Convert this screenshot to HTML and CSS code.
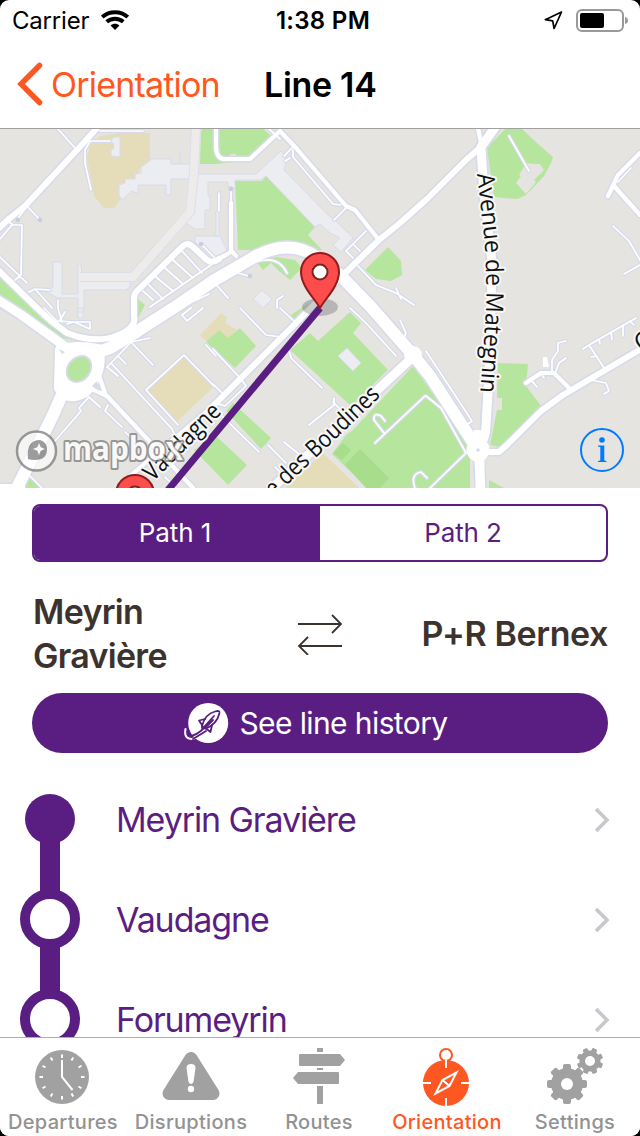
FILE: index.html
```html
<!DOCTYPE html>
<html lang="en">
<head>
<meta charset="utf-8">
<title>Line 14</title>
<link rel="stylesheet" href="styles.css">
</head>
<body>
<div class="screen">
  <header class="status">
    <div class="status-left"><span class="carrier">Carrier</span>
      <svg class="wifi" width="28" height="20" viewBox="0 0 28 20" fill="none" stroke="#000" stroke-width="4"><path d="M1.200 7C8.400 .6 19.600 .6 26.800 7"/><path d="M5.700 11.800C10.400 7.600 17.600 7.600 22.300 11.800"/><path d="M9.600 15.600C12 13.200 16 13.200 18.400 15.600L14 20Z" fill="#000" stroke="none"/></svg>
    </div>
    <div class="time">1:38 PM</div>
    <div class="status-right">
      <svg width="20" height="20" viewBox="0 0 20 20" fill="none" stroke="#000" stroke-width="1.700" stroke-linejoin="round"><path d="M18.500 2 2.300 9.700 9.700 10.900 11.100 18.500Z"/></svg>
      <svg width="54" height="24" viewBox="0 0 54 24"><rect x="2" y="2" width="46" height="21" rx="5" fill="none" stroke="#999" stroke-width="2"/><rect x="5" y="5" width="24" height="15" rx="2"/><path d="M50 9Q53 10 53 12.500T50 16Z" fill="#999"/></svg>
    </div>
  </header>
  <nav class="nav">
    <svg width="26" height="44" viewBox="0 0 26 44" fill="none" stroke="#ff5722" stroke-width="5.500" stroke-linecap="round" stroke-linejoin="miter"><path d="M22.500 3.500 4 22 22.500 40.500"/></svg>
    <span class="back">Orientation</span>
    <h1 class="title">Line 14</h1>
  </nav>
  <section class="map">
    <svg class="map-canvas" width="640" height="360" viewBox="0 128 640 360">
      <defs>
        <g id="thin">
          <path d="M57 128 75 148M90 141H110M90 141 85 150V163L91 190M100 131H143M27 206 17 220M27 206 40 220M0 239 12 225H22L21 275 15 280M8 221 13 225M0 257 27 283M29 292 35 289 52 308M35 289 50 290M58 300V308L62 322M201 244 214 257"/>
          <path d="M150 307 211 265M182 251 202 273M173 260 193 278M165 268 183 284M156 277 173 291M149 285 163 299M143 291 153 300M190 303 209 294"/>
          <path d="M268 128 280 139M293 150V157L333 204 341 205M293 147 284 156M285 161 290 158M346 208 334 220M366 231 346 251 353 258M353 244 360 251M358 266 376 285 396 293 414 305M401 299 396 288M231 188V203M234 272 249 276M234 272Q252 261 266 260T287 273M219 193V211M277 308V300L283 296M213 281 228 298"/>
          <path d="M350 308 366 323 396 356M400 320 406 333 403 340M289 351 291 358 322 388M334 398V405L309 425M333 402 346 415M240 308 266 335 281 337M280 308 296 323M213 349 241 379 246 386 225 406 219 404M213 384 222 393M221 415 259 452M268 445 286 463M284 442 300 455M275 467 285 477"/>
          <path d="M425 396 375 443M384 433 374 420Q373 412 381 416L385 421M415 488Q410 474 421 472L427 478M426 396 441 408 466 453 430 488M426 351 472 421 468 424M509 136 529 171"/>
          <path d="M613 226 629 241 640 260M624 274 640 265M618 182 631 168M552 371V360L558 351V343L566 341M556 371 559 363 566 358M532 381 537 387M541 373 544 378M604 368 589 345 636 318M583 349 589 345M599 339 600 344M611 332 612 340M623 325V336M630 321 634 325M591 357 597 356M591 380 606 383 609 391 604 394"/>
          <path d="M55 441 81 411 79 408 89 397 100 407M108 405 105 411 122 427M125 432 138 444M118 376 107 367 114 360 131 342 150 338M131 342 153 365M119 357 126 364M111 363 172 429 177 440 188 450M146 390 184 355 214 386M146 390 178 425M182 315 191 308M182 315 187 321 203 308M44 308 57 321M57 321 74 322 90 329V322H74L67 324M60 320 65 312M165 477 176 488M30 476 42 488M206 345 216 356"/>
        </g>
        <g id="narrow">
          <path d="M216 128V145Q216 160 226 159H250L280 131 296 148 346 206 355 210 379 240M231 203V250L236 256M213 262 231 252M640 153 618 175 608 196M614 186 640 215M526 383 541 373H554L571 390M478 128 482 147M90 388 107 396 193 488M97 370 106 396M130 476 213 406"/>
        </g>
        <g id="medium">
          <path d="M-2 229 10 218 25 206 77 150 97 128M-2 270 37 308 50 320 67 333Q95 344 116 336T134 316V298Q134 294 137 291L183 246Q188 242 193 247L207 260Q212 264 219 259M213 406 296 323 340 278 379 240 400 223 427 199 466 160 482 146M478 452H499L509 443 541 411 563 395 641 349M0 487H22"/>
        </g>
        <g id="wide">
          <path d="M-2 300 20 314 45 332 70 350M496 126 481 147 484 195 492 261 491 308 489 375 486 425Q486 438 478 450L481 490M270 490 415 355"/>
        </g>
        <g id="trunk">
          <path d="M80 358 110 348 133 334 178 305 213 281 256 256Q291 238 318 258L340 275 371 307 413 355 430 376 478 450M65 388 53 415 16 490"/>
          <path d="M61 350Q79 346 98 350Q102 374 84 392Q68 400 60 388Z"/>
        </g>
        <g id="pin">
          <path d="M0 0C-5-9-19-22-19-36A19 19 0 0 1 19-36C19-22 5-9 0 0Z" fill="#fc4c4b" stroke="#951a1b" stroke-width="2"/>
          <circle cy="-36" r="7.500" fill="#fff" stroke="#7e2425" stroke-width="2"/>
        </g>
        <path id="mategnin" d="M477 174 484 236Q488 285 485 325L480 396"/>
      </defs>
      <rect y="128" width="640" height="360" fill="#e5e4e1"/>
      <g fill="#e5ddb9">
        <path d="M90 145 100 136 119 133H150V160L140 168 135 178 119 185 120 200 114 208H104L94 196 90 175 87 158Z"/>
        <path d="M143 390 184 356 214 386 176 423ZM200 335 221 313 227 317 225 323 237 330 228 338 219 330 207 342ZM323 453 359 488H285Z"/>
      </g>
      <g fill="#b6e59e">
        <path d="M201 133 202 128H263L270 135 252 160 216 164H200ZM235 181H262L266 176 315 227 308 235 322 250H238ZM257 262 276 257 295 260 302 268 290 280 279 271 271 263 263 270ZM365 270 388 247 401 261 402 275 391 281 376 279Z"/>
        <path d="M487 148 506 128H521L538 144 553 157 551 163 544 176 526 195 517 199 494 197ZM0 275 12 285 36 306 60 331 90 343 63 338 40 324 18 308 0 298ZM137 298 145 305 138 318Z"/>
        <path d="M206 342 219 330 228 338 240 328 256 346 235 368ZM233 403 271 438 261 449 226 411ZM194 450 216 436 247 465 228 485ZM290 350 310 333 318 341 350 312 361 323 353 333 388 370 351 406ZM291 315 309 303 313 310 296 323Z"/>
        <path d="M413 366 470 445V488H368L332 454 346 435 353 430ZM498 363 528 364 526 386 541 406 500 447 490 445 497 410H502V398H497ZM489 480 504 488H489ZM28 476 43 488H23Z"/>
      </g>
      <path d="M343 443 351 450 342 460 333 453ZM360 449 389 478 380 488H366L345 465Z" fill="#a8dd8c"/>
      <path d="M516 183 521 176 519 175 526 163 534 164 540 164 544 170 534 180 536 182 526 194ZM271 128 268 133 263 128ZM230 154H236V158H230Z" fill="#e5e4e1"/>
      <g fill="#ebedf1" stroke="#d7dbea">
        <path d="M104 141 110 140 115 137H120V157L111 156V150L114 148 113 143ZM119 185 125 183V179H135V174L141 173V167L152 159H171V164H191V179H171V195H166V185H138V194L132 191 122 200 119 195ZM180 153V164"/>
        <path d="M53 262H62V294H78V264H81L82 274H131L130 287 126 290H84V312H78V298H58L44 291 53 287ZM195 236H220L227 250 214 262 195 242ZM216 211H219V236H216ZM347 348 361 363 353 371 338 356ZM262 290 272 299 263 308 253 299ZM78 308H83V318H78Z"/>
        <path d="M197 174H256L281 151 287 158 284 170 328 215 335 220 353 238 341 252 333 245 340 238 330 233 320 224 315 227 266 176 261 180H235V188H228V182H208V196H210V210H205V229H195L186 223 191 208 194 180Z"/>
      </g>
      <path d="M196 126 194 172 190 212 133 277H80" fill="none" stroke="#dcdfea" stroke-width="10"/>
      <path d="M196 126 194 172 190 212 133 277H80" fill="none" stroke="#edecea" stroke-width="8"/>
      <g fill="none" stroke="#d6daea" stroke-linejoin="round" stroke-linecap="round">
        <use href="#thin" stroke-width="4"/><use href="#narrow" stroke-width="7"/><use href="#medium" stroke-width="9"/><use href="#wide" stroke-width="12.500"/><use href="#trunk" stroke-width="15"/>
      </g>
      <g fill="none" stroke="#fff" stroke-linejoin="round" stroke-linecap="round">
        <use href="#thin" stroke-width="1.700"/><use href="#narrow" stroke-width="4.200"/><use href="#medium" stroke-width="6"/><use href="#wide" stroke-width="9"/><use href="#trunk" stroke-width="12"/>
      </g>
      <path d="M61 350Q79 346 98 350Q102 374 84 392Q68 400 60 388Z" fill="#fff"/>
      <ellipse cx="79" cy="369" rx="11" ry="14" transform="rotate(38 79 369)" fill="#b6e59e" stroke="#d6daea" stroke-width="2"/>
      <path d="M59 349 65 352 62 354ZM92 386 97 381 99 391Z" fill="#d6daea"/>
      <path d="M478 450V430M478 450 468 434M480 488V455" stroke="#fff" stroke-width="9" fill="none"/>
      <circle cx="478" cy="450" r="11.500" fill="#fff"/>
      <circle cx="478" cy="450" r="1.800" fill="#d6daea"/>
      <circle cx="413" cy="355" r="9" fill="#fff"/>
      <path d="M543 357H547L549 367H543Z" fill="#fff"/>
      <g fill="#c9cde0"><circle cx="40" cy="220" r="2.200"/><circle cx="18" cy="220" r="2.200"/><circle cx="201" cy="244" r="2.200"/><circle cx="231" cy="189" r="2.200"/><circle cx="250" cy="276" r="2.200"/></g>
      <ellipse cx="320" cy="307" rx="18" ry="9" fill="#000" opacity=".2"/>
      <path d="M320 308 168 490" stroke="#5a1e82" stroke-width="7"/>
      <g class="street">
        <text transform="translate(153 482) rotate(-45)" textLength="98" lengthAdjust="spacingAndGlyphs">Vaudagne</text>
        <text transform="translate(381 396) rotate(-43.500)" text-anchor="end" textLength="148" lengthAdjust="spacingAndGlyphs">e des Boudines</text>
        <text textLength="219" lengthAdjust="spacingAndGlyphs"><textPath href="#mategnin" textLength="219" lengthAdjust="spacingAndGlyphs">Avenue de Mategnin</textPath></text>
        <text transform="translate(640 352) rotate(-30)">C</text>
      </g>
      <g class="attribution">
        <circle cx="36.500" cy="451" r="19.500" fill="#fff" fill-opacity=".85" stroke="#7c7c7c" stroke-width="2.500"/>
        <path d="M28 459Q26 440 40 440A9 9 0 0 1 47 449Q47 460 35 460Q31 460 28 459Z" fill="#7c7c7c"/>
        <path d="M39 443 40.700 447.300 45 449 40.700 450.700 39 455 37.300 450.700 33 449 37.300 447.300Z" fill="#fff"/>
        <text x="63" y="460" textLength="120" lengthAdjust="spacingAndGlyphs">mapbox</text>
      </g>
      <use href="#pin" x="320" y="308"/>
      <use href="#pin" x="135" y="530"/>
      <g fill="#007aff"><circle cx="602" cy="450" r="21" fill="none" stroke="#007aff" stroke-width="2"/><circle cx="602" cy="440" r="2.800"/><path d="M598 445.500H604.300V460.500L606.500 461V462H598V461L600.300 460.500V447L598 446.500Z"/></g>
    </svg>
  </section>
  <main class="content">
    <div class="segments"><span class="segment active">Path 1</span><span class="segment">Path 2</span></div>
    <div class="direction">
      <span class="terminus">Meyrin<br>Gravière</span>
      <svg width="46" height="42" viewBox="0 0 46 42" fill="none" stroke="#3c322e" stroke-width="1.800"><path d="M1 11H44M35 2 44 11 35 20M45 33H2M11 24 2 33 11 42"/></svg>
      <span class="terminus end">P+R Bernex</span>
    </div>
    <div class="history">
      <svg width="45" height="42" viewBox="0 0 45 42" fill="none" stroke="#5a1e82" stroke-linecap="round" stroke-linejoin="round">
        <circle cx="24.200" cy="21" r="20" fill="#fff" stroke="none"/>
        <path d="M1.500 27Q0 35 5 36.500T15 34" stroke="#fff" stroke-width="2"/>
        <path d="M5 29 5.500 34Q12 34 20 26M9 37 22 29" stroke-width="1.800"/>
        <path d="M18 24Q21 12 31 9.500 36 8 35.500 11 33 22 22 26.500Z" stroke-width="1.800"/>
        <path d="M21 17 15 18.500 18 23 18 26 22 26.500 26.500 30 28 23M20 25 30 14M22 25 29 18" stroke-width="1.800"/>
      </svg>
      <span>See line history</span>
    </div>
    <ul class="stops">
      <li class="stop"><span class="rail"><i class="dot"></i></span><span class="name">Meyrin Gravière</span><svg width="18" height="28" viewBox="0 0 18 28" class="chev"><path d="M3 4 14 15 3 26"/></svg></li>
      <li class="stop"><span class="rail through"><i class="ring"></i></span><span class="name">Vaudagne</span><svg width="18" height="28" viewBox="0 0 18 28" class="chev"><path d="M3 4 14 15 3 26"/></svg></li>
      <li class="stop"><span class="rail through"><i class="ring"></i></span><span class="name">Forumeyrin</span><svg width="18" height="28" viewBox="0 0 18 28" class="chev"><path d="M3 4 14 15 3 26"/></svg></li>
    </ul>
  </main>
  <footer class="tabs">
    <div class="tab"><svg width="60" height="60" viewBox="0 0 60 60"><circle cx="29" cy="30" r="27" fill="#a1a1a1"/>
      <g stroke="#fff" stroke-width="2" transform="translate(-1 0)"><path d="M30 7.500V11M30 49V52.500M7.500 30H11M49 30H52.500"/><path d="M30 7.500V11M30 49V52.500M7.500 30H11M49 30H52.500" transform="rotate(30 30 30)"/><path d="M30 7.500V11M30 49V52.500M7.500 30H11M49 30H52.500" transform="rotate(60 30 30)"/><path d="M30 13V30L40.500 43" fill="none"/></g></svg><span>Departures</span></div>
    <div class="tab"><svg width="60" height="60" viewBox="0 0 60 60"><path d="M30 11.500 52 46.500H8Z" fill="#a1a1a1" stroke="#a1a1a1" stroke-width="13" stroke-linejoin="round"/><path d="M25.500 21Q25.500 17 30 17T34.500 21L32.500 35Q30 39 27.500 35Z" fill="#fff"/><circle cx="30" cy="42" r="3.200" fill="#fff"/></svg><span>Disruptions</span></div>
    <div class="tab"><svg width="60" height="60" viewBox="0 0 60 60" fill="#a1a1a1"><path d="M28 1H34V5H28ZM28 21H34V23H28ZM28 39H34V57H28ZM11 7H51L56 13 51 19H11Q10 19 10 18V8Q10 7 11 7ZM9 25H49Q50 25 50 26V36Q50 37 49 37H9L4 31Z"/></svg><span>Routes</span></div>
    <div class="tab selected"><svg width="60" height="60" viewBox="0 0 60 60"><circle cx="29" cy="36" r="23" fill="#ff5722"/><circle cx="29" cy="8" r="6" fill="#fff" stroke="#ff5722" stroke-width="2"/><g fill="none" stroke="#fff" stroke-width="2"><path d="M29 13V21M29 51V59M6 36H14M44 36H52M39.500 25.500 25.500 33 18.500 46.500 32.500 39ZM25.500 33 32.500 39"/></g></svg><span>Orientation</span></div>
    <div class="tab"><svg width="60" height="60" viewBox="0 0 60 60">
      <defs><g id="gear"><circle r="16"/><g id="teeth"><rect x="-4" y="-20" width="8" height="40" rx="2"/><rect x="-20" y="-4" width="40" height="8" rx="2"/></g><use href="#teeth" transform="rotate(45)"/></g></defs>
      <g fill="#a1a1a1"><use href="#gear" transform="translate(22 37)"/><use href="#gear" transform="translate(45 14) rotate(22) scale(.66)"/></g><circle cx="22" cy="37" r="6" fill="#fff"/><circle cx="45" cy="14" r="5" fill="#fff"/></svg><span>Settings</span></div>
  </footer>
</div>
</body>
</html>
```
FILE: styles.css
```css
* { box-sizing: border-box; }
body { margin: 0; background: #000; font-family: Inter, "Liberation Sans", sans-serif; }
.screen { width: 640px; height: 1136px; background: #fff; border-radius: 9px; overflow: hidden; display: flex; flex-direction: column; }
.screen svg { display: block; flex: none; }

.status { height: 40px; padding: 0 11px 0 12px; display: grid; grid-template-columns: 1fr auto 1fr; align-items: center; font-size: 24px; }
.status-left { display: flex; align-items: center; gap: 12px; }
.carrier { letter-spacing: -0.2px; }
.time { font-weight: 600; letter-spacing: 0.3px; padding-left: 5px; }
.status-right { display: flex; align-items: center; justify-content: flex-end; gap: 12px; }

.nav { height: 88px; padding: 0 17px; display: flex; align-items: center; }
.back { margin-left: 8px; width: 212px; color: #ff5722; font-size: 34px; letter-spacing: -0.8px; }
.title { margin: 0; padding-left: 1px; font-size: 34px; font-weight: 600; letter-spacing: -0.3px; }

.map { height: 360px; flex: none; position: relative; }
.map::before { content: ""; position: absolute; left: 0; top: 0; width: 100%; height: 1px; background: #a1a09e; }
.street { font-family: "Open Sans", "Noto Sans", sans-serif; font-size: 24px; font-weight: 500; fill: #111; stroke: #f8f8f7; stroke-width: 4px; stroke-linejoin: round; paint-order: stroke; }
.attribution { opacity: 0.75; }
.attribution text { font: bold 33px "Open Sans", sans-serif; fill: #fff; stroke: #7c7c7c; stroke-width: 4px; stroke-linejoin: round; paint-order: stroke; }

.content { flex: 1; min-height: 0; overflow: hidden; padding-top: 16px; }
.segments { height: 58px; margin: 0 32px; display: flex; border: 2px solid #5a1e82; border-radius: 8px; overflow: hidden; }
.segment { flex: 0 0 286px; display: flex; align-items: center; justify-content: center; color: #5a1e82; font-size: 26px; letter-spacing: -0.1px; padding-bottom: 1px; }
.segment.active { background: #5a1e82; color: #fff; padding-right: 4px; }
.direction { height: 88px; margin: 28px 32px 15px; display: grid; grid-template-columns: 1fr 46px 1fr; align-items: center; }
.terminus { color: #3c322e; font-size: 34px; line-height: 44px; font-weight: 600; letter-spacing: -0.7px; padding-left: 1px; }
.end { text-align: right; letter-spacing: -0.4px; }
.history { height: 60px; margin: 0 32px; padding-right: 8px; border-radius: 30px; background: #5a1e82; color: #fff; display: flex; align-items: center; justify-content: center; gap: 10px; font-size: 30px; letter-spacing: -0.6px; }
.stops { list-style: none; margin: 16px 0 0; padding: 0; }
.stop { height: 100px; padding: 0 29px 0 20px; display: flex; align-items: center; }
.rail { width: 60px; height: 100px; display: flex; align-items: center; justify-content: center; background: linear-gradient(#5a1e82, #5a1e82) center bottom / 20px 50px no-repeat; }
.through { background-size: 20px 100px; }
.dot { width: 50px; height: 50px; border-radius: 50%; background: #5a1e82; }
.ring { width: 60px; height: 60px; border: 10px solid #5a1e82; border-radius: 50%; background: #fff; }
.name { flex: 1; margin-left: 36px; color: #5a1e82; font-size: 34px; letter-spacing: -1.1px; }
.chev { fill: none; stroke: #c7c7cc; stroke-width: 3.5px; }

.tabs { height: 99px; flex: none; border-top: 1px solid #adadad; background: #fff; display: flex; padding-top: 9px; }
.tab { flex: 0 0 128px; display: flex; flex-direction: column; align-items: center; padding-right: 2px; color: #929292; font-size: 20px; font-weight: 500; line-height: 24px; letter-spacing: 0.3px; }
.tab span { margin-top: 3px; }
.selected { color: #ff5722; }
```
